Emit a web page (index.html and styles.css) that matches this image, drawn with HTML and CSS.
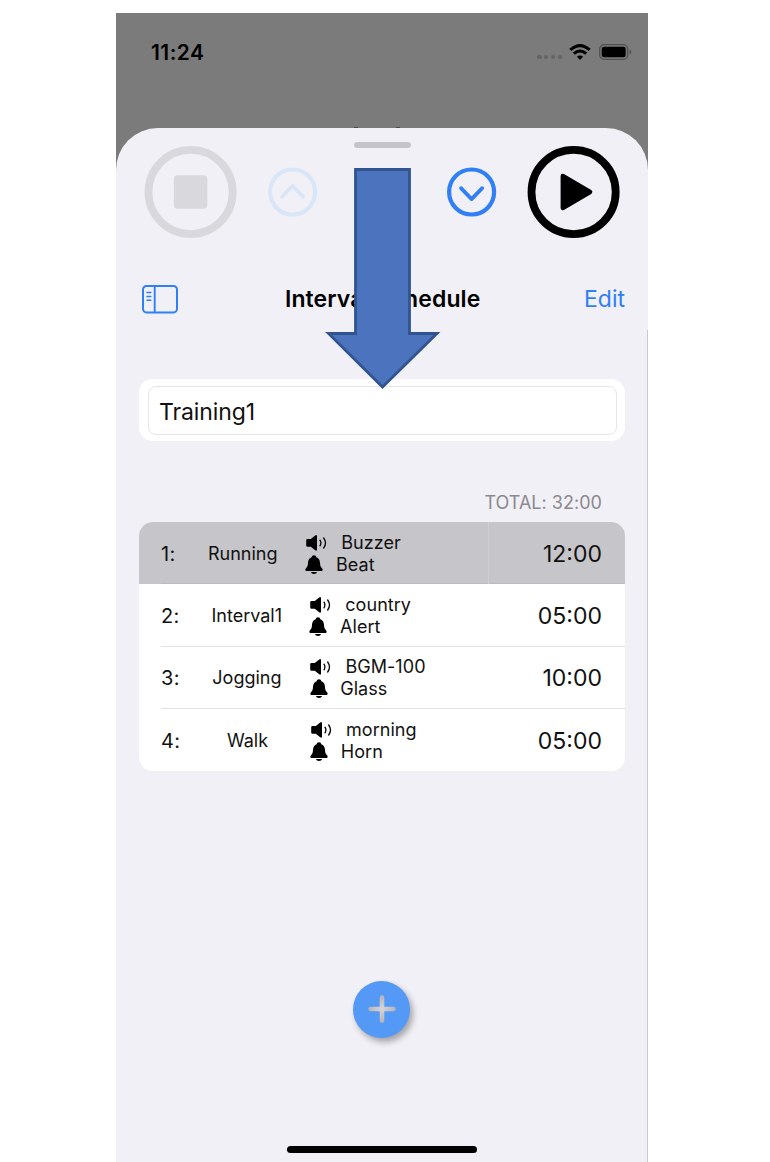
FILE: index.html
```html
<!DOCTYPE html>
<html lang="en">
<head>
<meta charset="utf-8">
<title>Interval Schedule</title>
<link rel="stylesheet" href="styles.css">
</head>
<body>
<svg class="defs" width="0" height="0">
  <symbol id="speaker" viewBox="0 0 22 16">
    <path d="M1.6 3.9H4.8L9.2.4Q10.8-.5 11 1.1V14.7Q10.8 16.3 9.2 15.3L4.8 11.8H1.6Q.2 11.8.2 10.4V5.3Q.2 3.9 1.6 3.9Z"/>
    <path d="M14 5.2Q15.8 8 14 10.8M17.7 3Q21.3 8 17.7 13" fill="none" stroke="#000" stroke-width="1.3" stroke-linecap="round"/>
  </symbol>
  <symbol id="bell" viewBox="0 0 18 20">
    <path d="M9 .3C10.3.3 11.2 1.1 11.3 2.3C13.6 3.2 14.9 5.1 15 7.8C15.1 11 15.8 12 17 13.2C18.2 14.6 17.6 15.9 16.2 15.9H1.8C.4 15.9-.2 14.6 1 13.2C2.2 12 2.9 11 3 7.8C3.1 5.1 4.4 3.2 6.7 2.3C6.8 1.1 7.7.3 9 .3ZM5.9 17H12.1Q11.5 19.1 9 19.1Q6.5 19.1 5.9 17Z"/>
  </symbol>
</svg>
<main class="phone">
  <header class="status">
    <span class="clock">11:24</span>
    <span class="dots"><i></i><i></i><i></i><i></i></span>
    <svg class="wifi" width="22" height="16" viewBox="0 0 22 16">
      <g fill="none" stroke="#000" stroke-width="3">
        <path d="M1.3 5.9Q11-2.6 20.7 5.9"/>
        <path d="M4.8 9.7Q11 4.2 17.2 9.7"/>
      </g>
      <path d="M11 15.9L7.9 12.8Q11 10 14.1 12.8Z"/>
    </svg>
    <svg class="battery" width="33" height="16" viewBox="0 0 33 16">
      <rect x=".7" y=".7" width="28" height="14.6" rx="4.4" fill="none" stroke="#515151" stroke-width="1.3"/>
      <rect x="2.7" y="2.7" width="24" height="10.6" rx="2.4"/>
      <path d="M30.6 5.4Q32.4 6.3 32.4 8Q32.4 9.7 30.6 10.6Z" fill="#515151"/>
    </svg>
  </header>
  <div class="peek"><i></i><i></i></div>
  <section class="sheet">
    <div class="grabber"></div>
    <div class="controls">
      <svg class="stop" width="92" height="92" viewBox="0 0 92 92">
        <circle cx="45.6" cy="46" r="42.1" fill="none" stroke="#d9d8dd" stroke-width="7.8"/>
        <rect x="28.9" y="29.3" width="33.4" height="33.4" rx="4" fill="#d9d8dd"/>
      </svg>
      <svg class="up" width="50" height="50" viewBox="0 0 50 50" fill="none" stroke="#d9e6f7" stroke-width="4.2" stroke-linecap="round" stroke-linejoin="round">
        <circle cx="24.6" cy="25" r="22.5"/>
        <path d="M14 29.7L24.6 18.7L35.2 29.7" stroke-width="3.7"/>
      </svg>
      <svg class="down" width="50" height="50" viewBox="0 0 50 50" fill="none" stroke="#2f7ff7" stroke-width="4.2" stroke-linecap="round" stroke-linejoin="round">
        <circle cx="24.6" cy="25" r="22.5"/>
        <path d="M14 21.1L24.6 32.1L35.2 21.1" stroke-width="3.7"/>
      </svg>
      <svg class="play" width="92" height="92" viewBox="0 0 92 92">
        <circle cx="45.6" cy="46" r="42.1" fill="none" stroke="#000" stroke-width="7.8"/>
        <path d="M34.8 30L62.1 46L34.8 62Z" stroke="#000" stroke-width="4.4" stroke-linejoin="round"/>
      </svg>
    </div>
    <nav class="nav">
      <svg width="36" height="29" viewBox="0 0 36 29" fill="none" stroke="#2f7ff7" stroke-linecap="round">
        <rect x="1" y="1" width="34" height="26.4" rx="3.6" stroke-width="2"/>
        <path d="M12.7 1.2V27.2" stroke-width="1.9"/>
        <path d="M5 7.5H8.8M5 11.4H8.8M5 15.3H8.8" stroke-width="1.5"/>
      </svg>
      <h1 class="title">Interval Schedule</h1>
      <span class="edit">Edit</span>
    </nav>
    <div class="card"><div class="field">Training1</div></div>
    <div class="total">TOTAL: 32:00</div>
    <div class="list">
      <div class="row active"><span class="num">1:</span><span class="name">Running</span><div class="info"><div class="sound"><svg width="22" height="16"><use href="#speaker"/></svg>Buzzer</div><div class="alert"><svg width="18" height="20"><use href="#bell"/></svg>Beat</div></div><span class="time">12:00</span></div>
      <div class="row"><span class="num">2:</span><span class="name">Interval1</span><div class="info"><div class="sound"><svg width="22" height="16"><use href="#speaker"/></svg>country</div><div class="alert"><svg width="18" height="20"><use href="#bell"/></svg>Alert</div></div><span class="time">05:00</span></div>
      <div class="row"><span class="num">3:</span><span class="name">Jogging</span><div class="info"><div class="sound"><svg width="22" height="16"><use href="#speaker"/></svg>BGM-100</div><div class="alert"><svg width="18" height="20"><use href="#bell"/></svg>Glass</div></div><span class="time">10:00</span></div>
      <div class="row"><span class="num">4:</span><span class="name">Walk</span><div class="info"><div class="sound"><svg width="22" height="16"><use href="#speaker"/></svg>morning</div><div class="alert"><svg width="18" height="20"><use href="#bell"/></svg>Horn</div></div><span class="time">05:00</span></div>
    </div>
    <div class="add">
      <svg width="28" height="28" viewBox="0 0 28 28">
        <defs><radialGradient id="plus"><stop offset="0" stop-color="#d6d6da"/><stop offset="1" stop-color="#b3b3b8"/></radialGradient></defs>
        <path d="M11.7 2.5Q11.7.3 14 .3Q16.3.3 16.3 2.5V11.7H25.5Q27.7 11.7 27.7 14Q27.7 16.3 25.5 16.3H16.3V25.5Q16.3 27.7 14 27.7Q11.7 27.7 11.7 25.5V16.3H2.5Q.3 16.3.3 14Q.3 11.7 2.5 11.7H11.7Z" fill="url(#plus)"/>
      </svg>
    </div>
    <div class="home"></div>
    <div class="edge"></div>
  </section>
  <svg class="arrow" width="116" height="224" viewBox="0 0 116 224">
    <path d="M30.5 2.5H84.5V166.5H112L57.5 220L3.5 166.5H30.5Z" fill="#4c73be" stroke="#31548f" stroke-width="2.8"/>
  </svg>
</main>
</body>
</html>
```
FILE: styles.css
```css
* { box-sizing: border-box; }
body { margin: 0; background: #fff; font-family: Inter, "Liberation Sans", sans-serif; color: #111; }
svg { display: block; flex: none; }
.defs { position: absolute; }
.phone { position: relative; width: 532px; height: 1149px; margin: 13px 0 0 116px; background: #7b7b7b; overflow: hidden; display: flex; flex-direction: column; }
.status { height: 114px; padding: 27px 16px 0 35px; display: flex; align-items: flex-start; flex: none; }
.clock { font-size: 21px; line-height: 25px; font-weight: 600; letter-spacing: .45px; color: #000; margin-right: auto; }
.dots { display: flex; gap: 2.6px; margin: 15px 7px 0 0; }
.dots i { width: 4.2px; height: 4.2px; border-radius: 50%; background: #646464; }
.wifi { margin: 3.5px 8px 0 0; }
.battery { margin-top: 3.5px; }
.peek { height: 1px; padding-left: 238px; display: flex; gap: 38px; flex: none; }
.peek i { width: 4px; height: 1px; background: #4c4c4c; }
.sheet { flex: 1; background: #f1f0f6; border-radius: 42px 42px 0 0; padding-top: 14px; display: flex; flex-direction: column; position: relative; }
.grabber { width: 57px; height: 6px; border-radius: 3px; background: #c5c4ca; margin: 0 auto 0 238px; flex: none; }
.controls { display: flex; align-items: center; height: 92px; margin: -2px 0 0 29px; flex: none; }
.controls svg { overflow: visible; }
.up { margin-left: 31px; }
.down { margin-left: 129px; }
.play { margin-left: 31px; }
.nav { height: 36px; margin: 43px 23px 0 26px; display: flex; align-items: center; flex: none; }
.title { margin: 0 0 0 107px; font-size: 23px; line-height: 36px; font-weight: 600; letter-spacing: .09px; color: #000; white-space: nowrap; }
.edit { margin-left: auto; font-size: 23px; line-height: 36px; color: #2f7ff7; }
.card { height: 62px; margin: 62.4px 23px 0; padding: 7px 8.5px 7px 9px; background: #fff; border-radius: 14px; flex: none; }
.field { height: 48.5px; border: 1px solid #e6e6e8; border-radius: 8px; padding-left: 10px; font-size: 23px; line-height: 50px; letter-spacing: -.1px; }
.total { margin: 50px 46px 0 0; text-align: right; font-size: 18px; line-height: 24px; letter-spacing: .03px; color: #8a898e; flex: none; }
.list { margin: 6.6px 23px 0; height: 249.4px; border-radius: 14px; background: #fff; overflow: hidden; position: relative; flex: none; }
.row { height: 62.35px; padding: 1.2px 23px 0 22px; display: flex; align-items: center; background: linear-gradient(#e1e0e4, #e1e0e4) 22px 100% / 100% 1px no-repeat; }
.row:last-child { background: none; }
.row.active { background: linear-gradient(90deg, transparent 349px, #cfced4 349px, #cfced4 350px, transparent 350px), linear-gradient(#bbbabf, #bbbabf) 22px 100% / 100% 1px no-repeat, #c6c5ca; }
.num { font-size: 20px; line-height: 24px; letter-spacing: .4px; }
.name { width: 130.5px; padding-left: 3.5px; text-align: center; font-size: 18px; line-height: 24px; }
.info { font-size: 18px; line-height: 22px; letter-spacing: .05px; }
.sound, .alert { display: flex; height: 22px; align-items: center; }
.sound svg { margin: 0 13.4px 0 -.4px; }
.alert svg { margin: 0 12.6px 0 -.8px; }
.time { margin-left: auto; font-size: 23px; line-height: 28px; }
.add { width: 57px; height: 57px; margin: 209.6px 0 0 237px; border-radius: 50%; background: #5599f6; box-shadow: 3px 4px 6px rgba(0,0,0,.32); display: flex; align-items: center; justify-content: center; flex: none; }
.home { width: 190px; height: 7px; margin: 108.2px 0 0 171px; border-radius: 4px; background: #000; flex: none; }
.edge { position: absolute; right: 0; top: 202px; bottom: 0; width: 1px; background: #cac9ce; }
.arrow { position: absolute; left: 209px; top: 154px; }
```
